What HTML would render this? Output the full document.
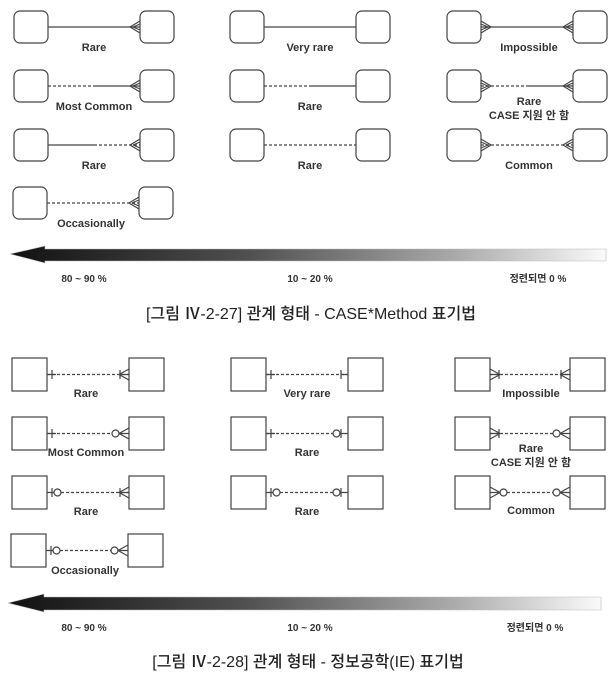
<!DOCTYPE html>
<html><head><meta charset="utf-8">
<style>
html,body{margin:0;padding:0;background:#fff;}
svg{display:block}
text{font-family:"Liberation Sans","Noto Sans CJK KR",sans-serif;fill:#333;}
.l{font-size:11px;font-weight:bold;text-anchor:middle;}
.c{font-size:16px;text-anchor:middle;fill:#222;font-weight:500;}
</style></head><body>
<svg width="613" height="681" viewBox="0 0 613 681" xmlns="http://www.w3.org/2000/svg">
<defs>
<linearGradient id="g" x1="0" x2="1" y1="0" y2="0">
<stop offset="0" stop-color="#111"/><stop offset="0.4" stop-color="#505050"/><stop offset="0.75" stop-color="#aaa"/><stop offset="1" stop-color="#fafafa"/>
</linearGradient>
</defs>
<g fill="none" stroke="#444" stroke-width="1.2">
<g transform="translate(14,11)">
<rect x="0" y="0" width="34" height="32" rx="6"/><rect x="126" y="0" width="34" height="32" rx="6"/>
<line x1="34" y1="16" x2="126" y2="16"/>
<path d="M116 16 L126 10 M116 16 L126 22 M119 16 L126 13 M119 16 L126 19"/>
</g>
<g transform="translate(14,70)">
<rect x="0" y="0" width="34" height="32" rx="6"/><rect x="126" y="0" width="34" height="32" rx="6"/>
<line x1="34" y1="16" x2="80" y2="16" stroke-dasharray="3,2"/><line x1="80" y1="16" x2="126" y2="16"/>
<path d="M116 16 L126 10 M116 16 L126 22 M119 16 L126 13 M119 16 L126 19"/>
</g>
<g transform="translate(14,129)">
<rect x="0" y="0" width="34" height="32" rx="6"/><rect x="126" y="0" width="34" height="32" rx="6"/>
<line x1="34" y1="16" x2="80" y2="16"/><line x1="80" y1="16" x2="126" y2="16" stroke-dasharray="3,2"/>
<path d="M116 16 L126 10 M116 16 L126 22 M119 16 L126 13 M119 16 L126 19"/>
</g>
<g transform="translate(13,187)">
<rect x="0" y="0" width="34" height="32" rx="6"/><rect x="126" y="0" width="34" height="32" rx="6"/>
<line x1="34" y1="16" x2="126" y2="16" stroke-dasharray="3,2"/>
<path d="M116 16 L126 10 M116 16 L126 22 M119 16 L126 13 M119 16 L126 19"/>
</g>
<g transform="translate(230,11)">
<rect x="0" y="0" width="34" height="32" rx="6"/><rect x="126" y="0" width="34" height="32" rx="6"/>
<line x1="34" y1="16" x2="126" y2="16"/>
</g>
<g transform="translate(230,70)">
<rect x="0" y="0" width="34" height="32" rx="6"/><rect x="126" y="0" width="34" height="32" rx="6"/>
<line x1="34" y1="16" x2="80" y2="16" stroke-dasharray="3,2"/><line x1="80" y1="16" x2="126" y2="16"/>
</g>
<g transform="translate(230,129)">
<rect x="0" y="0" width="34" height="32" rx="6"/><rect x="126" y="0" width="34" height="32" rx="6"/>
<line x1="34" y1="16" x2="126" y2="16" stroke-dasharray="3,2"/>
</g>
<g transform="translate(447,11)">
<rect x="0" y="0" width="34" height="32" rx="6"/><rect x="126" y="0" width="34" height="32" rx="6"/>
<line x1="34" y1="16" x2="126" y2="16"/>
<path d="M44 16 L34 10 M44 16 L34 22 M41 16 L34 13 M41 16 L34 19"/>
<path d="M116 16 L126 10 M116 16 L126 22 M119 16 L126 13 M119 16 L126 19"/>
</g>
<g transform="translate(447,70)">
<rect x="0" y="0" width="34" height="32" rx="6"/><rect x="126" y="0" width="34" height="32" rx="6"/>
<line x1="34" y1="16" x2="80" y2="16" stroke-dasharray="3,2"/><line x1="80" y1="16" x2="126" y2="16"/>
<path d="M44 16 L34 10 M44 16 L34 22 M41 16 L34 13 M41 16 L34 19"/>
<path d="M116 16 L126 10 M116 16 L126 22 M119 16 L126 13 M119 16 L126 19"/>
</g>
<g transform="translate(447,129)">
<rect x="0" y="0" width="34" height="32" rx="6"/><rect x="126" y="0" width="34" height="32" rx="6"/>
<line x1="34" y1="16" x2="126" y2="16" stroke-dasharray="3,2"/>
<path d="M44 16 L34 10 M44 16 L34 22 M41 16 L34 13 M41 16 L34 19"/>
<path d="M116 16 L126 10 M116 16 L126 22 M119 16 L126 13 M119 16 L126 19"/>
</g>

<g transform="translate(12,358)">
<rect x="0" y="0" width="35" height="33"/><rect x="117" y="0" width="35" height="33"/>
<line x1="35" y1="16.5" x2="117" y2="16.5" stroke-dasharray="3,2"/>
<path d="M35 16.5 H44 M40 12 V21 M107 16.5 H117 M107 16.5 L117 11 M107 16.5 L117 22 M108 12 V21"/>
</g>
<g transform="translate(12,417)">
<rect x="0" y="0" width="35" height="33"/><rect x="117" y="0" width="35" height="33"/>
<line x1="35" y1="16.5" x2="100" y2="16.5" stroke-dasharray="3,2"/>
<path d="M35 16.5 H44 M40 12 V21 M107 16.5 H117 M107 16.5 L117 11 M107 16.5 L117 22"/>
<circle cx="103.5" cy="16.5" r="3.5"/>
</g>
<g transform="translate(12,476)">
<rect x="0" y="0" width="35" height="33"/><rect x="117" y="0" width="35" height="33"/>
<line x1="49" y1="16.5" x2="117" y2="16.5" stroke-dasharray="3,2"/>
<path d="M35 16.5 H42 M40 12 V21 M107 16.5 H117 M107 16.5 L117 11 M107 16.5 L117 22 M108 12 V21"/>
<circle cx="45.5" cy="16.5" r="3.5"/>
</g>
<g transform="translate(11,534)">
<rect x="0" y="0" width="35" height="33"/><rect x="117" y="0" width="35" height="33"/>
<line x1="49" y1="16.5" x2="100" y2="16.5" stroke-dasharray="3,2"/>
<path d="M35 16.5 H42 M40 12 V21 M107 16.5 H117 M107 16.5 L117 11 M107 16.5 L117 22"/>
<circle cx="45.5" cy="16.5" r="3.5"/><circle cx="103.5" cy="16.5" r="3.5"/>
</g>
<g transform="translate(231,358)">
<rect x="0" y="0" width="35" height="33"/><rect x="117" y="0" width="35" height="33"/>
<line x1="35" y1="16.5" x2="117" y2="16.5" stroke-dasharray="3,2"/>
<path d="M35 16.5 H44 M40 12 V21 M110 16.5 H117 M110 12 V21"/>
</g>
<g transform="translate(231,417)">
<rect x="0" y="0" width="35" height="33"/><rect x="117" y="0" width="35" height="33"/>
<line x1="35" y1="16.5" x2="102" y2="16.5" stroke-dasharray="3,2"/>
<path d="M35 16.5 H44 M40 12 V21 M109 16.5 H117 M110 12 V21"/>
<circle cx="105.5" cy="16.5" r="3.5"/>
</g>
<g transform="translate(231,476)">
<rect x="0" y="0" width="35" height="33"/><rect x="117" y="0" width="35" height="33"/>
<line x1="49" y1="16.5" x2="102" y2="16.5" stroke-dasharray="3,2"/>
<path d="M35 16.5 H42 M40 12 V21 M109 16.5 H117 M110 12 V21"/>
<circle cx="45.5" cy="16.5" r="3.5"/><circle cx="105.5" cy="16.5" r="3.5"/>
</g>
<g transform="translate(455,358)">
<rect x="0" y="0" width="35" height="33"/><rect x="115" y="0" width="35" height="33"/>
<line x1="35" y1="16.5" x2="115" y2="16.5" stroke-dasharray="3,2"/>
<path d="M35 16.5 H45 M45 16.5 L35 11 M45 16.5 L35 22 M44 12 V21 M105 16.5 H115 M105 16.5 L115 11 M105 16.5 L115 22 M106 12 V21"/>
</g>
<g transform="translate(455,417)">
<rect x="0" y="0" width="35" height="33"/><rect x="115" y="0" width="35" height="33"/>
<line x1="35" y1="16.5" x2="98" y2="16.5" stroke-dasharray="3,2"/>
<path d="M35 16.5 H45 M45 16.5 L35 11 M45 16.5 L35 22 M44 12 V21 M105 16.5 H115 M105 16.5 L115 11 M105 16.5 L115 22"/>
<circle cx="101.5" cy="16.5" r="3.5"/>
</g>
<g transform="translate(455,476)">
<rect x="0" y="0" width="35" height="33"/><rect x="115" y="0" width="35" height="33"/>
<line x1="52" y1="16.5" x2="98" y2="16.5" stroke-dasharray="3,2"/>
<path d="M35 16.5 H45 M45 16.5 L35 11 M45 16.5 L35 22"/>
<path d="M105 16.5 H115 M105 16.5 L115 11 M105 16.5 L115 22"/>
<circle cx="48.5" cy="16.5" r="3.5"/><circle cx="101.5" cy="16.5" r="3.5"/>
</g>
</g>

<path d="M10 254 L45 246 L45 249 L606 249 L606 261 L45 261 L45 263 Z" fill="url(#g)" stroke="#bbb" stroke-width="0.6"/>
<path d="M8 603 L44 594 L44 597 L601 597 L601 610 L44 610 L44 612 Z" fill="url(#g)" stroke="#bbb" stroke-width="0.6"/>

<text class="l" x="94" y="51">Rare</text>
<text class="l" x="94" y="110">Most Common</text>
<text class="l" x="94" y="169">Rare</text>
<text class="l" x="91" y="227">Occasionally</text>
<text class="l" x="310" y="51">Very rare</text>
<text class="l" x="310" y="110">Rare</text>
<text class="l" x="310" y="169">Rare</text>
<text class="l" x="529" y="51">Impossible</text>
<text class="l" x="529" y="105">Rare</text>
<text class="l" x="529" y="119">CASE 지원 안 함</text>
<text class="l" x="529" y="169">Common</text>
<text class="l" x="84" y="282" style="font-size:10px">80 ~ 90 %</text>
<text class="l" x="310" y="282" style="font-size:10px">10 ~ 20 %</text>
<text class="l" x="538" y="282" style="font-size:10px">정련되면 0 %</text>
<text class="c" x="311" y="319">[그림 Ⅳ-2-27] 관계 형태 - CASE*Method 표기법</text>

<text class="l" x="86" y="397">Rare</text>
<text class="l" x="86" y="456">Most Common</text>
<text class="l" x="86" y="515">Rare</text>
<text class="l" x="85" y="574">Occasionally</text>
<text class="l" x="307" y="397">Very rare</text>
<text class="l" x="307" y="456">Rare</text>
<text class="l" x="307" y="515">Rare</text>
<text class="l" x="531" y="397">Impossible</text>
<text class="l" x="531" y="452">Rare</text>
<text class="l" x="531" y="466">CASE 지원 안 함</text>
<text class="l" x="531" y="514">Common</text>
<text class="l" x="84" y="631" style="font-size:10px">80 ~ 90 %</text>
<text class="l" x="310" y="631" style="font-size:10px">10 ~ 20 %</text>
<text class="l" x="535" y="631" style="font-size:10px">정련되면 0 %</text>
<text class="c" x="308" y="667">[그림 Ⅳ-2-28] 관계 형태 - 정보공학(IE) 표기법</text>
</svg>
</body></html>
